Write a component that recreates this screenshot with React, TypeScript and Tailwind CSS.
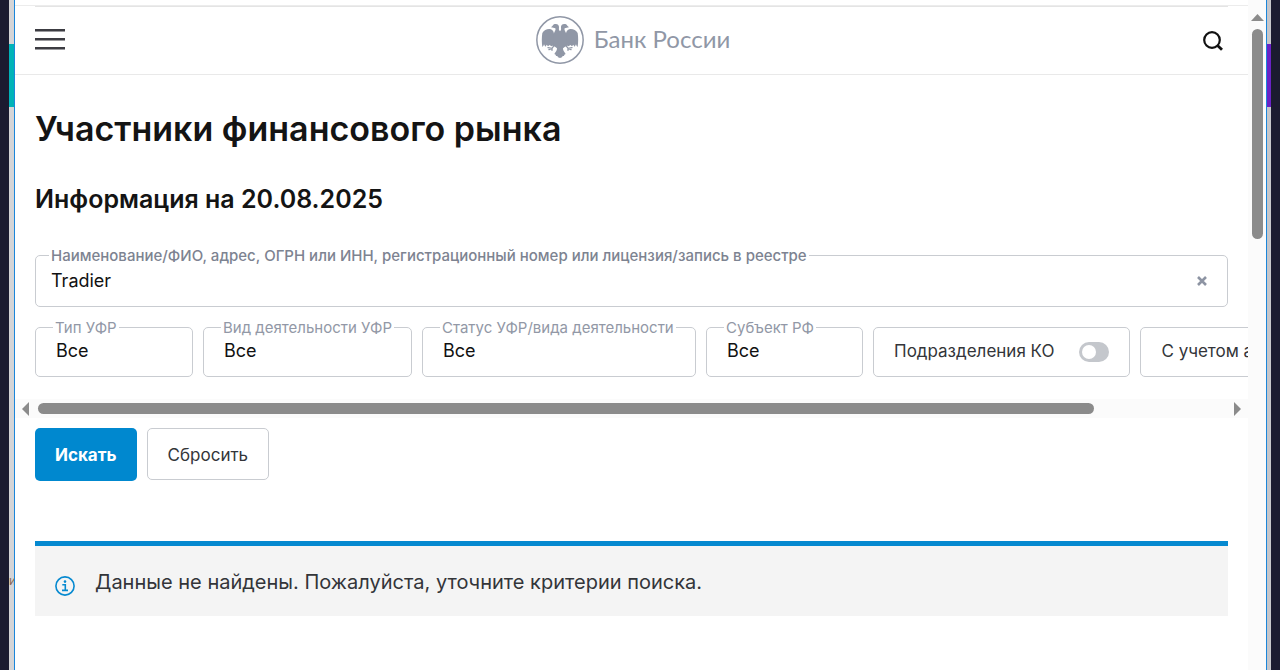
import { useState } from "react";

const filters = [
  { id: "type", label: "Тип УФР", width: "w-[158px]" },
  { id: "activity", label: "Вид деятельности УФР", width: "w-[209px]" },
  { id: "status", label: "Статус УФР/вида деятельности", width: "w-[274px]" },
  { id: "region", label: "Субъект РФ", width: "w-[157px]" },
];

const EagleLogo = () => (
  <svg width="48" height="48" viewBox="0 0 144 144" fill="none" aria-hidden="true">
    <circle cx="72" cy="72" r="69.500" stroke="#9097a6" strokeWidth="4.500" />
    <g fill="#9097a6">
      {/* heads, neck and body */}
      <path d="M72 46c-3-3-4-6-3-10 1-7-3-12-10-12-5 0-8 2-9 5l-5 5 7 1 6 2c2 4-1 8-3 12-1 4-3 6-6 7v32l9 5 5 4c0 6-3 10-8 17l4 2 1 4 4 0 2 4 6 2 6-2 2-4 4 0 1-4 4-2c-5-7-8-11-8-17l5-4 9-5V56c-3-1-5-3-6-7-2-4-5-8-3-12l6-2 7-1-5-5c-1-3-4-5-9-5-7 0-11 5-10 12 1 4 0 7-3 10z" />
      {/* wings */}
      <path d="M54 58c1-10-3-17-12-19-9-1-18 3-23 12-2 13-2 28 0 42 3-2 4-5 5-8l4 7c2-2 3-4 4-6l4 5 5-4 5 4 7-3z" />
      <path d="M90 58c-1-10 3-17 12-19 9-1 18 3 23 12 2 13 2 28 0 42-3-2-4-5-5-8l-4 7c-2-2-3-4-4-6l-4 5-5-4-5 4-7-3z" />
    </g>
    <g stroke="#9097a6" strokeWidth="4" strokeLinecap="round">
      <path d="M54 89l-6 8-12-2M48 97l-9 4M48 97l0 6" />
      <path d="M90 89l6 8 12-2M96 97l9 4M96 97l0 6" />
    </g>
  </svg>
);

const SearchIcon = () => (
  <svg width="22" height="22" viewBox="0 0 22 22" fill="none" stroke="#111" aria-hidden="true">
    <circle cx="10" cy="10" r="7.800" strokeWidth="2.200" />
    <path d="M15.500 15.500l4.500 4.300" strokeWidth="2.800" />
  </svg>
);

const InfoIcon = () => (
  <svg width="20" height="20" viewBox="0 0 20 20" fill="none" stroke="#0589d0" className="shrink-0" aria-hidden="true">
    <circle cx="10" cy="10" r="9.100" strokeWidth="1.600" />
    <path d="M7.300 8.700h3v5.600M7 14.400h6" strokeWidth="1.600" />
    <circle cx="10" cy="5.600" r="1.300" fill="#0589d0" stroke="none" />
  </svg>
);

function Switch({ label }: { label: string }) {
  return (
    <label className="flex h-[50px] shrink-0 items-center gap-[25px] rounded-[5px] border border-[#c9ccd1] px-5 text-[17px] text-[#333539]">
      <span className="whitespace-nowrap">{label}</span>
      <input
        type="checkbox"
        role="switch"
        className="h-5 w-[30px] appearance-none rounded-full bg-[#c4c7cc] before:m-[3px] before:block before:size-3.5 before:rounded-full before:bg-white checked:bg-[#0589d0] checked:before:ml-[13px]"
      />
    </label>
  );
}

function Header() {
  return (
    <header className="border-b border-[#e9e9e9]">
      <div className="h-[5px]" />
      <div className="border-t border-[#ececec]">
        <div className="mx-5 h-px bg-[#e4e4e4]" />
      </div>
      <div className="grid h-[67px] grid-cols-[1fr_auto_1fr] items-center px-5">
        <button type="button" aria-label="Меню" className="flex w-[30px] flex-col gap-[6px] pb-[2px]">
          <span className="h-[3px] w-full border-b border-[#9a9a9e] bg-[#3c3c42]" />
          <span className="h-[3px] w-full border-b border-[#9a9a9e] bg-[#3c3c42]" />
          <span className="h-[3px] w-full border-b border-[#9a9a9e] bg-[#3c3c42]" />
        </button>
        <a href="#" className="flex items-center gap-[10px] pb-[2px] pl-[3px] text-[#9097a6]">
          <EagleLogo />
          <span className="pb-[2px] font-['Lato','Noto_Sans',sans-serif] text-2xl">Банк России</span>
        </a>
        <button type="button" aria-label="Поиск" className="mr-1 justify-self-end">
          <SearchIcon />
        </button>
      </div>
    </header>
  );
}

function ScrollTrack() {
  return (
    <div className="flex h-[19px] items-center gap-[9px] bg-[#fbfbfb] px-[7px]" aria-hidden="true">
      <svg width="7" height="14" viewBox="0 0 7 14" fill="#8b8b8b">
        <path d="M7 0v14L0 7z" />
      </svg>
      <div className="flex-1">
        <div className="h-[11px] w-[89%] rounded-full bg-[#8b8b8b]" />
      </div>
      <svg width="7" height="14" viewBox="0 0 7 14" fill="#8b8b8b">
        <path d="M0 0v14l7-7z" />
      </svg>
    </div>
  );
}

export default function App() {
  const [query, setQuery] = useState("Tradier");

  return (
    <div className="flex min-h-screen bg-[#1b1b30] px-[9px] font-['Inter','Noto_Sans',sans-serif]">
      <div className="flex w-[5px] shrink-0 flex-col overflow-hidden bg-[#d5d5d7]">
        <div className="mt-11 h-[63px] bg-[#00b3b8]" />
        <span className="mt-[466px] text-xs leading-4 text-[#8a6a55]">и</span>
      </div>

      <div className="flex min-w-0 flex-1 border-x border-[#1b86da] bg-white">
        <div className="min-w-0 flex-1">
          <Header />

          <main>
            <div className="px-5">
              <h1 className="pt-8 text-[34px] leading-[44px] font-semibold text-[#141414]">
                Участники финансового рынка
              </h1>
              <h2 className="pt-8 text-[25px] leading-8 font-semibold text-[#141414]">
                Информация на 20.08.2025
              </h2>

              <div className="relative mt-10 flex h-[52px] items-center rounded-[5px] border border-[#c9ccd1] px-[15px]">
                <label
                  htmlFor="query"
                  className="absolute -top-[10px] left-[13px] bg-white px-[2px] text-[15px] leading-5 font-medium whitespace-nowrap text-[#7d8391]"
                >
                  Наименование/ФИО, адрес, ОГРН или ИНН, регистрационный номер или лицензия/запись в реестре
                </label>
                <input
                  id="query"
                  value={query}
                  onChange={(e) => setQuery(e.target.value)}
                  className="min-w-0 flex-1 text-lg text-[#111] outline-none"
                />
                <button type="button" aria-label="Очистить" onClick={() => setQuery("")} className="mr-[5px]">
                  <svg width="10" height="10" viewBox="0 0 10 10" stroke="#8d94a3" strokeWidth="2.600">
                    <path d="M1 1l8 8M9 1L1 9" />
                  </svg>
                </button>
              </div>
            </div>

            <div className="flex gap-[10px] overflow-hidden pt-5 pb-[22px] pl-5">
              {filters.map((f) => (
                <div key={f.id} className={`relative h-[50px] shrink-0 rounded-[5px] border border-[#c9ccd1] ${f.width}`}>
                  <label
                    htmlFor={f.id}
                    className="absolute -top-[10px] left-[17px] bg-white px-[2px] text-[15px] leading-5 whitespace-nowrap text-[#9298a6]"
                  >
                    {f.label}
                  </label>
                  <select id={f.id} className="h-[46px] w-full appearance-none rounded-[5px] px-5 text-lg text-[#111] outline-none">
                    <option>Все</option>
                  </select>
                </div>
              ))}
              <Switch label="Подразделения КО" />
              <Switch label="С учетом аннулированных" />
            </div>

            <ScrollTrack />

            <div className="px-5 pt-[10px]">
              <div className="flex items-start gap-[10px]">
                <button type="button" className="h-[53px] rounded-[5px] bg-[#0088cf] px-5 pt-[2px] text-[17px] font-bold text-white">
                  Искать
                </button>
                <button type="button" className="h-[52px] rounded-[5px] border border-[#c9ccd1] px-5 pt-[3px] text-[17px] text-[#333539]">
                  Сбросить
                </button>
              </div>

              <div className="mt-[60px] flex items-end gap-5 border-t-[5px] border-[#0589d0] bg-[#f4f4f4] px-5 pt-6 pb-5">
                <InfoIcon />
                <p className="pb-px text-xl leading-[25px] text-[#333539]">
                  Данные не найдены. Пожалуйста, уточните критерии поиска.
                </p>
              </div>
            </div>
          </main>
        </div>

        <div className="flex w-[18px] shrink-0 flex-col items-center gap-2 bg-[#fbfbfb] pt-[14px]" aria-hidden="true">
          <svg width="13" height="7" viewBox="0 0 13 7" fill="#8b8b8b">
            <path d="M0 7h13L6.500 0z" />
          </svg>
          <div className="h-[210px] w-[11px] rounded-full bg-[#8b8b8b]" />
        </div>
      </div>

      <div className="w-[4px] shrink-0 bg-[#c6c6ca]">
        <div className="h-11" />
        <div className="h-[63px] bg-[#6a22c5]" />
      </div>
    </div>
  );
}
